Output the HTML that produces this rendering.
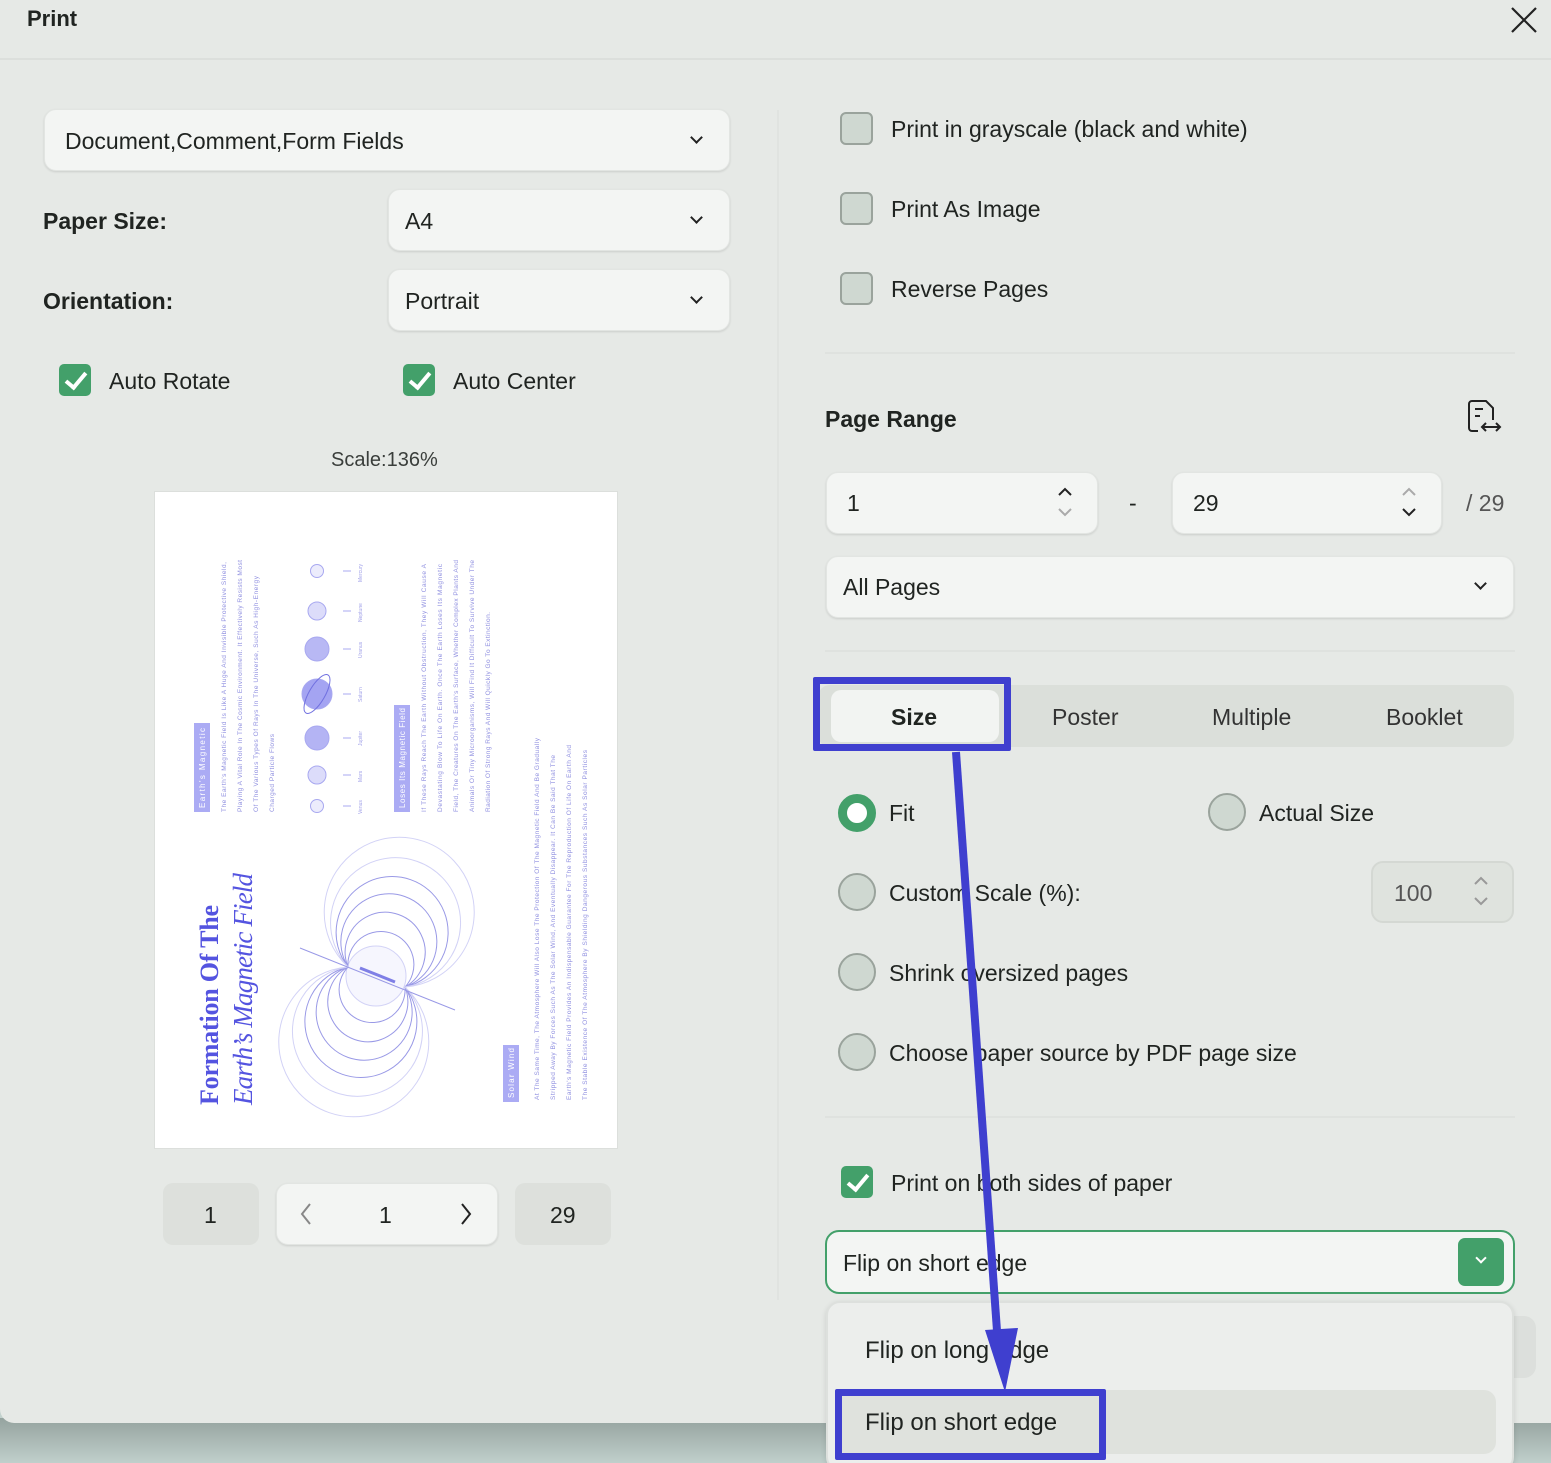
<!DOCTYPE html>
<html><head><meta charset="utf-8"><style>
*{margin:0;padding:0;box-sizing:border-box}
html,body{width:1551px;height:1463px;overflow:hidden}
body{background:#c3d2ce;font-family:"Liberation Sans",sans-serif;color:#1e2220;position:relative}
.strip{position:absolute;left:0;top:1418px;width:1551px;height:45px;background:linear-gradient(#95a39f,#c0cfcb)}
.dlg{position:absolute;left:0;top:0;width:1551px;height:1423px;background:#e6e9e6;border-radius:0 0 0 14px}
.a{position:absolute}
.t{position:absolute;font-size:23px;white-space:nowrap;color:#202421}
.b{font-weight:bold}
.field{position:absolute;background:#f3f5f3;border-radius:12px;box-shadow:0 1px 2px rgba(0,0,0,.12);border:1px solid #e2e5e2}
.chev{position:absolute;width:9px;height:9px;border-right:2px solid #222;border-bottom:2px solid #222;transform:rotate(45deg)}
.cb{position:absolute;width:33px;height:33px;border-radius:6px;background:#cfd8d1;border:2px solid #9aa39c}
.cbon{position:absolute;width:32px;height:32px;border-radius:5px;background:#43a06a}
.cbon:after{content:"";position:absolute;left:11px;top:4px;width:8px;height:17px;border-right:4px solid #fff;border-bottom:4px solid #fff;transform:rotate(40deg)}
.rd{position:absolute;width:38px;height:38px;border-radius:50%;background:#cfd8d1;border:2px solid #9aa39c}
.hr{position:absolute;height:2px;background:#dfe2df}
.blue{position:absolute;border:7px solid #3f3fcf;border-radius:2px}
</style></head><body>
<div class="strip"></div>
<div class="dlg">
 <div class="t b" style="left:27px;top:6px;font-size:22px">Print</div>
 <svg class="a" style="left:1510px;top:6px" width="28" height="28"><path d="M2 2L26 26M26 2L2 26" stroke="#222" stroke-width="2.2"/></svg>
 <div class="hr" style="left:0;top:58px;width:1551px;background:#dcdfdc"></div>

 <div class="field" style="left:44px;top:109px;width:686px;height:62px"></div>
 <div class="t" style="left:65px;top:128px">Document,Comment,Form Fields</div>
 <div class="chev" style="left:692px;top:133px"></div>

 <div class="t b" style="left:43px;top:208px">Paper Size:</div>
 <div class="field" style="left:388px;top:189px;width:342px;height:62px"></div>
 <div class="t" style="left:405px;top:208px">A4</div>
 <div class="chev" style="left:692px;top:213px"></div>

 <div class="t b" style="left:43px;top:288px">Orientation:</div>
 <div class="field" style="left:388px;top:269px;width:342px;height:62px"></div>
 <div class="t" style="left:405px;top:288px">Portrait</div>
 <div class="chev" style="left:692px;top:293px"></div>

 <div class="cbon" style="left:59px;top:364px"></div>
 <div class="t" style="left:109px;top:368px">Auto Rotate</div>
 <div class="cbon" style="left:403px;top:364px"></div>
 <div class="t" style="left:453px;top:368px">Auto Center</div>

 <div class="t" style="left:331px;top:449px;font-size:20px;color:#3a3e3b">Scale:136%</div>

 <div class="a" style="left:154px;top:491px;width:464px;height:658px;background:#fff;border:1px solid #dcdfdc"></div>
 <svg class="a" style="left:0;top:0" width="760" height="1160" font-family="Liberation Sans, sans-serif">
  <g fill="#8f8ff0" opacity=".75">
   <rect x="194" y="723" width="16" height="89"/>
   <rect x="394" y="705" width="16" height="107"/>
   <rect x="503" y="1045" width="16" height="57"/>
  </g>
  <g fill="#fff" font-size="8">
   <text transform="rotate(-90 205 808)" x="205" y="808" textLength="80">Earth's Magnetic</text>
   <text transform="rotate(-90 405 808)" x="405" y="808" textLength="100">Loses Its Magnetic Field</text>
   <text transform="rotate(-90 514 1098)" x="514" y="1098" textLength="50">Solar Wind</text>
  </g>
  <g fill="#9090e0" font-size="6.5">
   <text transform="rotate(-90 226 812)" x="226" y="812" textLength="250">The Earth's Magnetic Field Is Like A Huge And Invisible Protective Shield,</text>
   <text transform="rotate(-90 242 812)" x="242" y="812" textLength="252">Playing A Vital Role In The Cosmic Environment. It Effectively Resists Most</text>
   <text transform="rotate(-90 258 812)" x="258" y="812" textLength="236">Of The Various Types Of Rays In The Universe, Such As High-Energy</text>
   <text transform="rotate(-90 274 812)" x="274" y="812" textLength="78">Charged Particle Flows</text>
   <text transform="rotate(-90 426 812)" x="426" y="812" textLength="248">If These Rays Reach The Earth Without Obstruction, They Will Cause A</text>
   <text transform="rotate(-90 442 812)" x="442" y="812" textLength="248">Devastating Blow To Life On Earth. Once The Earth Loses Its Magnetic</text>
   <text transform="rotate(-90 458 812)" x="458" y="812" textLength="252">Field, The Creatures On The Earth's Surface, Whether Complex Plants And</text>
   <text transform="rotate(-90 474 812)" x="474" y="812" textLength="252">Animals Or Tiny Microorganisms, Will Find It Difficult To Survive Under The</text>
   <text transform="rotate(-90 490 812)" x="490" y="812" textLength="200">Radiation Of Strong Rays And Will Quickly Go To Extinction.</text>
   <text transform="rotate(-90 539 1100)" x="539" y="1100" textLength="362">At The Same Time, The Atmosphere Will Also Lose The Protection Of The Magnetic Field And Be Gradually</text>
   <text transform="rotate(-90 555 1100)" x="555" y="1100" textLength="345">Stripped Away By Forces Such As The Solar Wind, And Eventually Disappear. It Can Be Said That The</text>
   <text transform="rotate(-90 571 1100)" x="571" y="1100" textLength="355">Earth's Magnetic Field Provides An Indispensable Guarantee For The Reproduction Of Life On Earth And</text>
   <text transform="rotate(-90 587 1100)" x="587" y="1100" textLength="350">The Stable Existence Of The Atmosphere By Shielding Dangerous Substances Such As Solar Particles</text>
  </g>
  <g fill="#5454e0">
   <text transform="rotate(-90 218 1105)" x="218" y="1105" font-family="Liberation Serif, serif" font-weight="bold" font-size="26" textLength="200">Formation Of The</text>
   <text transform="rotate(-90 252 1105)" x="252" y="1105" font-family="Liberation Serif, serif" font-style="italic" font-size="27" textLength="232">Earth’s Magnetic Field</text>
  </g>
  <g stroke="#a8a8f0" stroke-width="1">
   <circle cx="317" cy="571" r="6.5" fill="#ececfc"/>
   <circle cx="317" cy="611" r="9" fill="#dcdcfa"/>
   <circle cx="317" cy="649" r="12" fill="#b8b8f4"/>
   <circle cx="317" cy="694" r="15" fill="#a4a4f2"/>
   <ellipse cx="317" cy="694" rx="8" ry="22" transform="rotate(30 317 694)" fill="none" stroke="#7070e0"/>
   <circle cx="317" cy="738" r="12" fill="#b4b4f4"/>
   <circle cx="317" cy="775" r="9" fill="#dcdcfa"/>
   <circle cx="317" cy="806" r="6.5" fill="#ececfc"/>
   <path d="M343 571H351M343 611H351M343 649H351M343 694H351M343 738H351M343 775H351M343 806H351"/>
  </g>
  <g fill="#a0a0e8" font-size="5">
   <text transform="rotate(-90 362 582)" x="362" y="582">Mercury</text>
   <text transform="rotate(-90 362 622)" x="362" y="622">Neptune</text>
   <text transform="rotate(-90 362 658)" x="362" y="658">Uranus</text>
   <text transform="rotate(-90 362 702)" x="362" y="702">Saturn</text>
   <text transform="rotate(-90 362 746)" x="362" y="746">Jupiter</text>
   <text transform="rotate(-90 362 782)" x="362" y="782">Mars</text>
   <text transform="rotate(-90 362 814)" x="362" y="814">Venus</text>
  </g>
  <g fill="none" stroke="#8080e0" stroke-width="1" opacity=".8">
   <circle cx="376" cy="976" r="30" fill="#f4f4fe" stroke="#c8c8f4"/>
   <path d="M348 967A33 33 0 1 1 405 987M348 967A40 40 0 1 1 405 987M348 967A48 48 0 1 1 405 987M348 967A56 56 0 1 1 405 987"/>
   <path d="M348 967A33 33 0 1 0 405 987M348 967A40 40 0 1 0 405 987M348 967A48 48 0 1 0 405 987M348 967A56 56 0 1 0 405 987"/>
   <path stroke="#c8c8f4" d="M348 967A65 65 0 1 1 405 987M348 967A75 75 0 1 1 405 987M348 967A65 65 0 1 0 405 987M348 967A75 75 0 1 0 405 987"/>
   <path d="M300 948L455 1010"/>
   <path d="M360 968L395 982" stroke="#6060e0" stroke-width="3"/>
  </g>
 </svg>

 <div class="a" style="left:163px;top:1183px;width:96px;height:62px;border-radius:10px;background:#dde0dc"></div>
 <div class="t" style="left:204px;top:1202px">1</div>
 <div class="field" style="left:276px;top:1183px;width:222px;height:62px"></div>
 <svg class="a" style="left:298px;top:1203px" width="180" height="22"><path d="M12 1L4 11L12 21" stroke="#888" stroke-width="2" fill="none"/><path d="M164 1L172 11L164 21" stroke="#222" stroke-width="2" fill="none"/></svg>
 <div class="t" style="left:379px;top:1202px">1</div>
 <div class="a" style="left:515px;top:1183px;width:96px;height:62px;border-radius:10px;background:#dde0dc"></div>
 <div class="t" style="left:550px;top:1202px">29</div>

 <div class="a" style="left:777px;top:110px;width:2px;height:1190px;background:#e0e3e0"></div>

 <div class="cb" style="left:840px;top:112px"></div>
 <div class="t" style="left:891px;top:116px">Print in grayscale (black and white)</div>
 <div class="cb" style="left:840px;top:192px"></div>
 <div class="t" style="left:891px;top:196px">Print As Image</div>
 <div class="cb" style="left:840px;top:272px"></div>
 <div class="t" style="left:891px;top:276px">Reverse Pages</div>
 <div class="hr" style="left:825px;top:352px;width:690px"></div>

 <div class="t b" style="left:825px;top:406px">Page Range</div>
 <svg class="a" style="left:1464px;top:398px" width="42" height="40"><path d="M14 33H8a3 3 0 0 1-3-3V6a3 3 0 0 1 3-3h14l7 7v12" stroke="#222" stroke-width="2" fill="none"/><path d="M11 11H19M11 18H16" stroke="#222" stroke-width="2"/><path d="M18 29H36M22 25L18 29L22 33M32 25L36 29L32 33" stroke="#222" stroke-width="2" fill="none"/></svg>

 <div class="field" style="left:826px;top:472px;width:272px;height:62px"></div>
 <div class="t" style="left:847px;top:490px">1</div>
 <svg class="a" style="left:1056px;top:485px" width="18" height="34"><path d="M3 10L9 4L15 10" stroke="#222" stroke-width="2" fill="none"/><path d="M3 24L9 30L15 24" stroke="#aaa" stroke-width="2" fill="none"/></svg>
 <div class="t" style="left:1129px;top:490px">-</div>
 <div class="field" style="left:1172px;top:472px;width:270px;height:62px"></div>
 <div class="t" style="left:1193px;top:490px">29</div>
 <svg class="a" style="left:1400px;top:485px" width="18" height="34"><path d="M3 10L9 4L15 10" stroke="#aaa" stroke-width="2" fill="none"/><path d="M3 24L9 30L15 24" stroke="#222" stroke-width="2" fill="none"/></svg>
 <div class="t" style="left:1466px;top:490px;color:#555">/ 29</div>

 <div class="field" style="left:826px;top:556px;width:688px;height:62px"></div>
 <div class="t" style="left:843px;top:574px">All Pages</div>
 <div class="chev" style="left:1476px;top:579px"></div>
 <div class="hr" style="left:825px;top:650px;width:690px"></div>

 <div class="a" style="left:818px;top:685px;width:696px;height:62px;border-radius:12px;background:#dbdfda"></div>
 <div class="a" style="left:831px;top:690px;width:168px;height:52px;border-radius:10px;background:#f2f4f2"></div>
 <div class="blue" style="left:813px;top:677px;width:198px;height:74px"></div>
 <div class="t b" style="left:891px;top:704px">Size</div>
 <div class="t" style="left:1052px;top:704px;color:#333">Poster</div>
 <div class="t" style="left:1212px;top:704px;color:#333">Multiple</div>
 <div class="t" style="left:1386px;top:704px;color:#333">Booklet</div>

 <div class="a" style="left:838px;top:794px;width:38px;height:38px;border-radius:50%;background:#fff;border:9px solid #43a06a"></div>
 <div class="t" style="left:889px;top:800px">Fit</div>
 <div class="rd" style="left:1208px;top:793px"></div>
 <div class="t" style="left:1259px;top:800px">Actual Size</div>
 <div class="rd" style="left:838px;top:873px"></div>
 <div class="t" style="left:889px;top:880px">Custom Scale (%):</div>
 <div class="a" style="left:1371px;top:861px;width:143px;height:62px;border-radius:12px;background:#dfe3de;border:2px solid #d4d8d3"></div>
 <div class="t" style="left:1394px;top:880px;color:#555">100</div>
 <svg class="a" style="left:1472px;top:874px" width="18" height="34"><path d="M3 10L9 4L15 10M3 24L9 30L15 24" stroke="#999" stroke-width="2" fill="none"/></svg>
 <div class="rd" style="left:838px;top:953px"></div>
 <div class="t" style="left:889px;top:960px">Shrink oversized pages</div>
 <div class="rd" style="left:838px;top:1033px"></div>
 <div class="t" style="left:889px;top:1040px">Choose paper source by PDF page size</div>
 <div class="hr" style="left:825px;top:1116px;width:690px"></div>

 <div class="cbon" style="left:841px;top:1166px"></div>
 <div class="t" style="left:891px;top:1170px">Print on both sides of paper</div>
 <div class="a" style="left:825px;top:1230px;width:690px;height:64px;border-radius:14px;background:#f3f5f3;border:2px solid #43a06a"></div>
 <div class="t" style="left:843px;top:1250px">Flip on short edge</div>
 <div class="a" style="left:1458px;top:1238px;width:46px;height:48px;border-radius:7px;background:#43a06a"></div>
 <div class="chev" style="left:1477px;top:1254px;border-color:#fff;width:8px;height:8px"></div>
</div>

<div class="a" style="left:1490px;top:1316px;width:46px;height:62px;border-radius:12px;background:#dcdfdc"></div>
<div class="a" style="left:826px;top:1301px;width:688px;height:170px;border-radius:14px;background:#eceeec;border:2px solid #dde0dd;box-shadow:0 2px 6px rgba(0,0,0,.12)"></div>
<div class="t" style="left:865px;top:1337px;font-size:24px">Flip on long edge</div>
<div class="a" style="left:836px;top:1390px;width:660px;height:64px;border-radius:12px;background:#dfe2dd"></div>
<div class="blue" style="left:835px;top:1389px;width:271px;height:71px"></div>
<div class="t" style="left:865px;top:1409px;font-size:24px">Flip on short edge</div>

<svg class="a" style="left:0;top:0" width="1551" height="1463"><path d="M956 752L998 1345" stroke="#3f3fcf" stroke-width="8"/><path d="M985 1330L1005 1392L1018 1328Z" fill="#3f3fcf"/></svg>
</body></html>
